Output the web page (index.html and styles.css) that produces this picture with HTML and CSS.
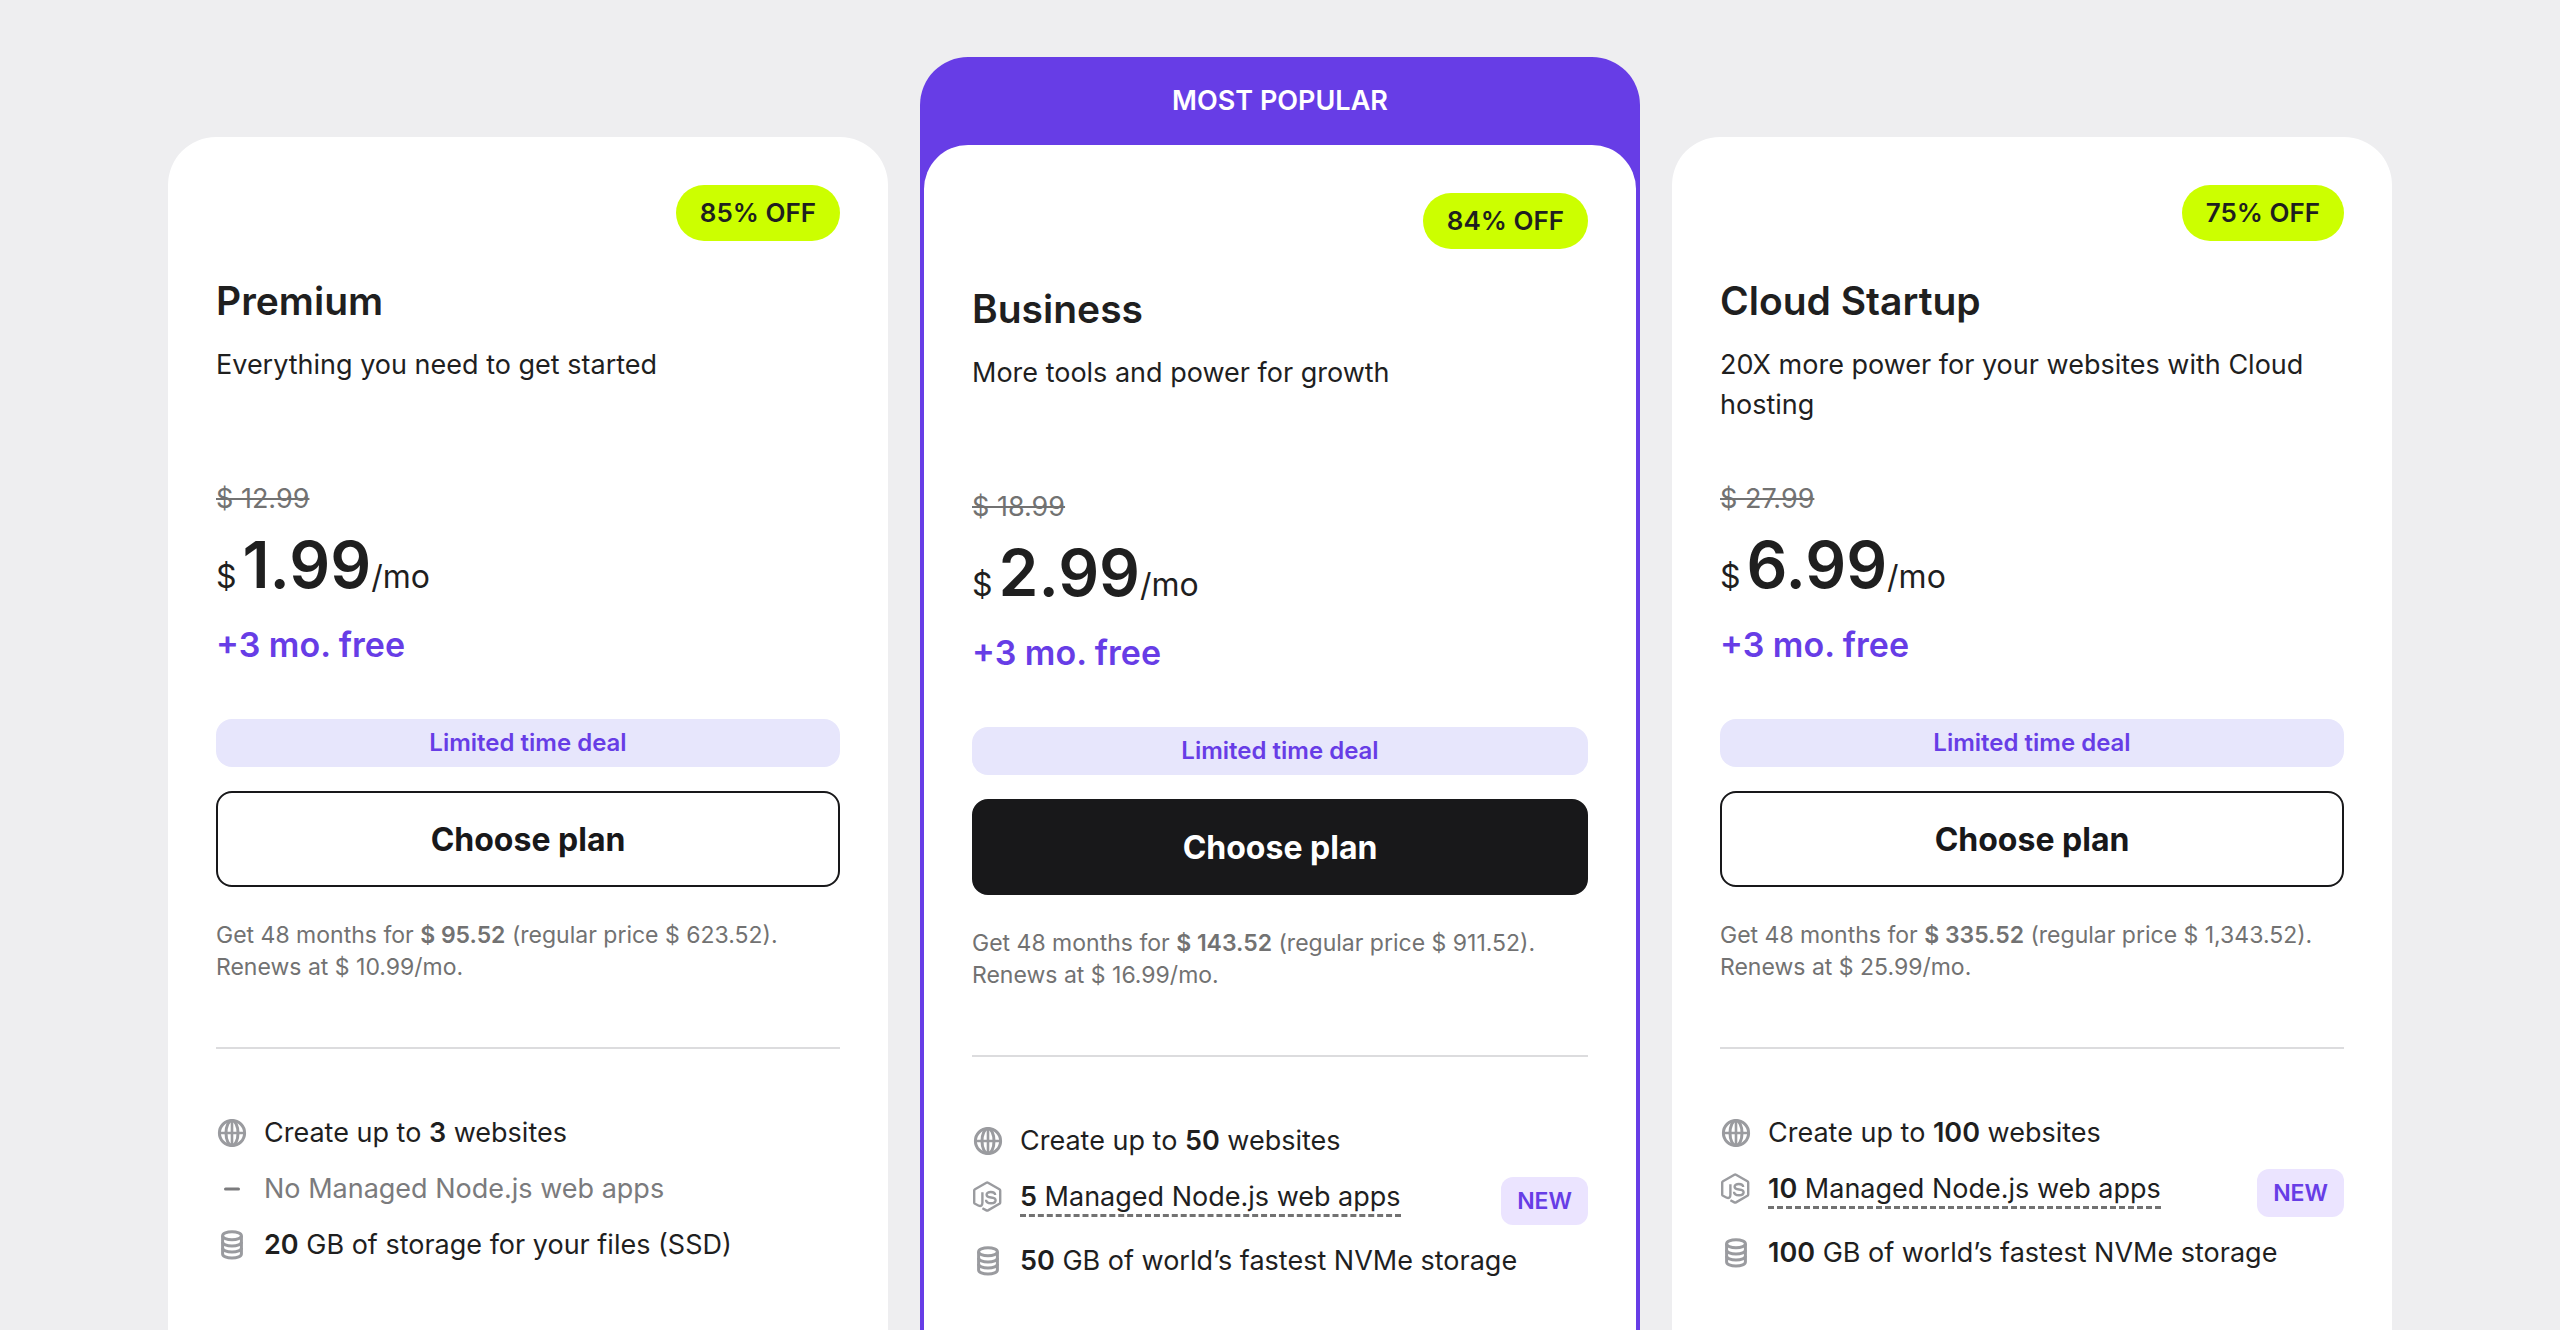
FILE: index.html
```
<!DOCTYPE html>
<html lang="en">
<head>
  <meta charset="UTF-8" />
  <meta name="viewport" content="width=device-width, initial-scale=1" />
  <title>Hosting Plans</title>
  <link rel="stylesheet" href="styles.css">
</head>
<body>
  <!-- icons shared by the feature lists -->
  <svg class="sprite" aria-hidden="true">
    <symbol id="icon-globe" viewBox="0 0 32 32">
      <g fill="none" stroke="currentColor" stroke-width="3">
        <circle cx="16" cy="16" r="12.6" />
        <ellipse cx="16" cy="16" rx="6" ry="12.6" />
        <path d="M16 3.4v25.2M3.4 16h25.2" stroke-width="2.6" />
      </g>
    </symbol>
    <symbol id="icon-storage" viewBox="0 0 32 32">
      <g fill="none" stroke="currentColor" stroke-width="3">
        <ellipse cx="16" cy="6.8" rx="9.4" ry="4" />
        <path d="M6.6 6.8v18.2c0 2.3 4.2 4 9.4 4s9.4-1.7 9.4-4V6.8" />
        <path d="M6.6 12.9c0 2.3 4.2 4 9.4 4s9.4-1.7 9.4-4M6.6 19c0 2.3 4.2 4 9.4 4s9.4-1.7 9.4-4" />
      </g>
    </symbol>
    <symbol id="icon-node" viewBox="0 0 32 32">
      <g fill="none" stroke="currentColor" stroke-width="2.4" stroke-linejoin="round">
        <path d="M10.4 11.2v10.6c0 2.6-1.4 3.6-3.6 2.9L3 22.8a1.6 1.6 0 0 1-.8-1.4V9.6c0-.6.3-1.1.8-1.4L14.4 1.7a1.6 1.6 0 0 1 1.6 0l11.4 6.5c.5.3.8.8.8 1.4v11.8c0 .6-.3 1.1-.8 1.4L16 29.4a1.6 1.6 0 0 1-1.6 0l-4-2.2" />
        <path d="M23.2 14c-.2-2-1.6-3-4.4-3-2.6 0-4.2 1-4.2 2.8 0 2 1.6 2.4 4.4 2.7 3 .3 4.6.8 4.6 2.8 0 1.9-1.6 3-4.6 3-3.2 0-4.9-1.2-5-3.6" />
      </g>
    </symbol>
    <symbol id="icon-dash" viewBox="0 0 32 32">
      <path d="M9.5 16h13" fill="none" stroke="currentColor" stroke-width="3" stroke-linecap="round" />
    </symbol>
  </svg>

  <main class="plans">
    <section class="plan">
      <div class="plan-body">
        <span class="discount">85% OFF</span>
        <h2>Premium</h2>
        <p class="description">Everything you need to get started</p>
        <s class="old-price">$ 12.99</s>
        <div class="price"><span>$</span><strong>1.99</strong><span>/mo</span></div>
        <p class="bonus">+3 mo. free</p>
        <div class="deal">Limited time deal</div>
        <button type="button" class="choose">Choose plan</button>
        <p class="terms">Get 48 months for <b>$ 95.52</b> (regular price $ 623.52).<br />Renews at $ 10.99/mo.</p>
        <hr />
        <ul class="features">
          <li><svg><use href="#icon-globe" /></svg><span>Create up to <b>3</b> websites</span></li>
          <li class="missing"><svg><use href="#icon-dash" /></svg><span>No Managed Node.js web apps</span></li>
          <li><svg><use href="#icon-storage" /></svg><span><b>20</b> GB of storage for your files (SSD)</span></li>
        </ul>
      </div>
    </section>

    <section class="plan popular">
      <div class="banner">MOST POPULAR</div>
      <div class="plan-body">
        <span class="discount">84% OFF</span>
        <h2>Business</h2>
        <p class="description">More tools and power for growth</p>
        <s class="old-price">$ 18.99</s>
        <div class="price"><span>$</span><strong>2.99</strong><span>/mo</span></div>
        <p class="bonus">+3 mo. free</p>
        <div class="deal">Limited time deal</div>
        <button type="button" class="choose">Choose plan</button>
        <p class="terms">Get 48 months for <b>$ 143.52</b> (regular price $ 911.52).<br />Renews at $ 16.99/mo.</p>
        <hr />
        <ul class="features">
          <li><svg><use href="#icon-globe" /></svg><span>Create up to <b>50</b> websites</span></li>
          <li><svg><use href="#icon-node" /></svg><span class="hint"><b>5</b> Managed Node.js web apps</span><span class="new">NEW</span></li>
          <li><svg><use href="#icon-storage" /></svg><span><b>50</b> GB of world’s fastest NVMe storage</span></li>
        </ul>
      </div>
    </section>

    <section class="plan">
      <div class="plan-body">
        <span class="discount">75% OFF</span>
        <h2>Cloud Startup</h2>
        <p class="description">20X more power for your websites with Cloud hosting</p>
        <s class="old-price">$ 27.99</s>
        <div class="price"><span>$</span><strong>6.99</strong><span>/mo</span></div>
        <p class="bonus">+3 mo. free</p>
        <div class="deal">Limited time deal</div>
        <button type="button" class="choose">Choose plan</button>
        <p class="terms">Get 48 months for <b>$ 335.52</b> (regular price $ 1,343.52).<br />Renews at $ 25.99/mo.</p>
        <hr />
        <ul class="features">
          <li><svg><use href="#icon-globe" /></svg><span>Create up to <b>100</b> websites</span></li>
          <li><svg><use href="#icon-node" /></svg><span class="hint"><b>10</b> Managed Node.js web apps</span><span class="new">NEW</span></li>
          <li><svg><use href="#icon-storage" /></svg><span><b>100</b> GB of world’s fastest NVMe storage</span></li>
        </ul>
      </div>
    </section>
  </main>
</body>
</html>
```
FILE: styles.css
```
* {
  box-sizing: border-box;
}

body {
  margin: 0;
  background-color: #eeeef0;
  color: #1f1f1f;
  font-family: Inter, "Liberation Sans", sans-serif;
  font-size: 27px;
  line-height: 40px;
}

h2,
p,
ul {
  margin: 0;
  padding: 0;
}

b {
  font-weight: 600;
}

.sprite {
  display: none;
}

.plans {
  display: grid;
  grid-template-columns: repeat(3, 1fr);
  gap: 32px;
  max-width: 2224px;
  min-height: 100vh;
  margin: 0 auto;
  padding-top: 57px;
}

.plan {
  margin-top: 80px;
  background-color: white;
  border-radius: 48px 48px 0 0;
}

.plan-body {
  display: flex;
  flex-direction: column;
  padding: 48px;
}

.popular {
  display: flex;
  flex-direction: column;
  margin-top: 0;
  padding: 0 4px;
  background-color: #673de6;
}

.popular .plan-body {
  flex: 1;
  background-color: white;
  border-radius: 44px 44px 0 0;
}

.banner {
  color: white;
  font-weight: 600;
  line-height: 88px;
  text-align: center;
}

.discount {
  align-self: flex-end;
  padding: 8px 24px;
  border-radius: 28px;
  background-color: #ccff00;
  font-size: 26px;
  font-weight: 600;
}

h2 {
  margin-top: 32px;
  font-size: 39px;
  font-weight: 600;
  line-height: 56px;
}

.description {
  min-height: 80px;
  margin: 16px 0 56px;
}

.old-price {
  color: #727272;
  line-height: 36px;
}

.price {
  display: flex;
  align-items: baseline;
  padding: 8px 0 14px;
  font-size: 32px;
  line-height: 40px;
}

.price strong {
  margin-left: 6px;
  font-size: 64px;
  font-weight: 600;
  line-height: 80px;
}

.bonus {
  color: #673de6;
  font-size: 34px;
  font-weight: 600;
  line-height: 52px;
}

.deal {
  margin: 48px 0 24px;
  border-radius: 16px;
  background-color: #e7e6fc;
  color: #673de6;
  font-size: 24px;
  font-weight: 600;
  line-height: 48px;
  text-align: center;
}

.choose {
  height: 96px;
  border: 2px solid #18181a;
  border-radius: 16px;
  background-color: white;
  color: #18181a;
  font-family: inherit;
  font-size: 32px;
  font-weight: 700;
  cursor: pointer;
}

.popular .choose {
  background-color: #18181a;
  color: white;
}

.terms {
  margin-top: 32px;
  color: #727272;
  font-size: 23px;
  line-height: 32px;
}

hr {
  width: 100%;
  margin: 64px 0;
  border: 0;
  border-top: 2px solid #dcdcde;
}

.features {
  display: flex;
  flex-direction: column;
  gap: 16px;
  list-style: none;
}

.features li {
  display: flex;
  align-items: flex-start;
  gap: 16px;
}

.features svg {
  flex: none;
  width: 32px;
  height: 32px;
  margin-top: 4px;
  color: #9a9b9f;
}

.features .missing,
.features .missing svg {
  color: #7b7b7d;
}

.hint {
  height: 40px;
  border-bottom: 3px dashed #727272;
}

.new {
  margin-left: auto;
  padding: 0 16px;
  border-radius: 12px;
  background-color: #ebe4ff;
  color: #673de6;
  font-size: 23px;
  font-weight: 600;
  line-height: 48px;
}

@media (max-width: 1800px) {
  .plans {
    grid-template-columns: 1fr;
    padding: 24px;
  }

  .plan {
    margin-top: 0;
  }
}
```
